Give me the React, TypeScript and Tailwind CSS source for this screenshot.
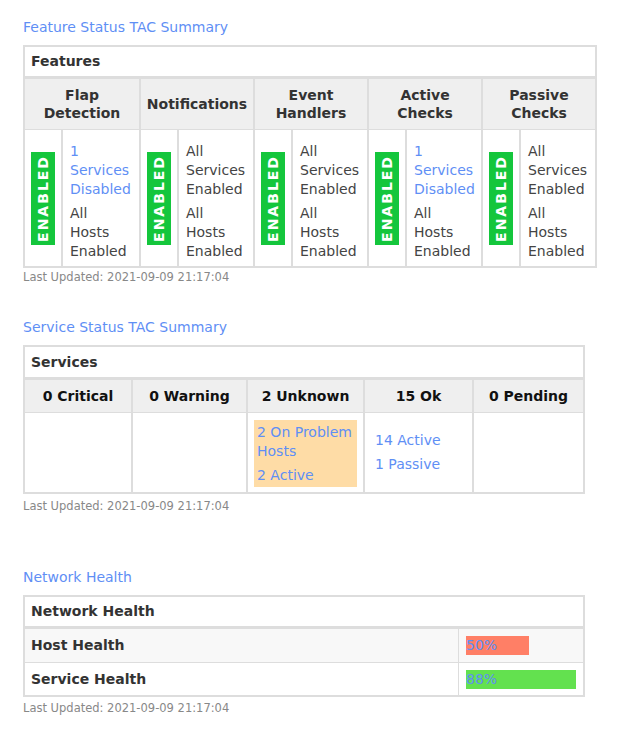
import React from "react";

const font = { fontFamily: '"DejaVu Sans", Verdana, sans-serif' };

type Feature = {
  title: string[];
  services: { text: string; link?: boolean };
  hosts: string;
};

const features: Feature[] = [
  { title: ["Flap", "Detection"], services: { text: "1 Services Disabled", link: true }, hosts: "All Hosts Enabled" },
  { title: ["Notifications"], services: { text: "All Services Enabled" }, hosts: "All Hosts Enabled" },
  { title: ["Event", "Handlers"], services: { text: "All Services Enabled" }, hosts: "All Hosts Enabled" },
  { title: ["Active", "Checks"], services: { text: "1 Services Disabled", link: true }, hosts: "All Hosts Enabled" },
  { title: ["Passive", "Checks"], services: { text: "All Services Enabled" }, hosts: "All Hosts Enabled" },
];

function Words({ text, className }: { text: string; className?: string }) {
  return (
    <div className={className}>
      {text.split(" ").map((w, i) => (
        <div key={i}>{w}</div>
      ))}
    </div>
  );
}

function SectionTitle({ children }: { children: React.ReactNode }) {
  return <h2 className="text-[14px] leading-[18px] text-[#5f8ff5] mb-[9px]">{children}</h2>;
}

function LastUpdated({ className = "mt-[2px]" }: { className?: string }) {
  return <p className={`text-[11.5px] leading-[14px] text-[#888] ${className}`}>Last Updated: 2021-09-09 21:17:04</p>;
}

function FeatureTable() {
  return (
    <div className="w-[574px] border-2 border-[#ddd]">
      <div className="h-[32px] flex items-center px-[6px] font-bold text-[14px] text-[#333] border-b-[3px] border-[#ddd]">
        Features
      </div>
      <div className="grid grid-cols-5">
        {features.map((f, i) => (
          <div key={i} className={`flex flex-col ${i > 0 ? "border-l-2 border-[#ddd]" : ""}`}>
            <div className="h-[51px] bg-[#efefef] flex flex-col items-center justify-center font-bold text-[14px] leading-[18px] text-[#333] border-b border-[#ddd]">
              {f.title.map((t) => (
                <div key={t}>{t}</div>
              ))}
            </div>
            <div className="h-[136px] flex">
              <div className="w-[38px] flex items-center justify-center border-r-2 border-[#ddd]">
                <div className="w-[24px] h-[93px] bg-[#14c63c] flex items-center justify-center">
                  <span className="[writing-mode:vertical-rl] rotate-180 text-white font-bold text-[14px] tracking-[2px] leading-[24px]">
                    ENABLED
                  </span>
                </div>
              </div>
              <div className="flex-1 pl-[7px] pt-[12px] text-[14px] leading-[19px] text-[#444]">
                <Words text={f.services.text} className={f.services.link ? "text-[#5f8ff5]" : ""} />
                <Words text={f.hosts} className="mt-[5px]" />
              </div>
            </div>
          </div>
        ))}
      </div>
    </div>
  );
}

const serviceCols = [
  { label: "0 Critical", w: "w-[106px]" },
  { label: "0 Warning", w: "w-[115px]" },
  { label: "2 Unknown", w: "w-[117px]" },
  { label: "15 Ok", w: "w-[109px]" },
  { label: "0 Pending", w: "flex-1" },
];

function ServiceTable() {
  return (
    <div className="w-[562px] border-2 border-[#ddd]">
      <div className="h-[33px] flex items-center px-[6px] font-bold text-[14px] text-[#333] border-b-[3px] border-[#ddd]">
        Services
      </div>
      <div className="flex">
        {serviceCols.map((c, i) => (
          <div key={i} className={`${c.w} flex flex-col ${i > 0 ? "border-l-2 border-[#ddd]" : ""}`}>
            <div className="h-[33px] bg-[#efefef] flex items-center justify-center font-bold text-[14px] text-[#111] border-b border-[#ddd]">
              {c.label}
            </div>
            <div className="h-[79px] text-[14px] leading-[19px] text-[#5f8ff5]">
              {i === 2 && (
                <div className="mx-[6px] mt-[7px] h-[67px] bg-[#fedca6] px-[3px] pt-[3px]">
                  <div>2 On Problem</div>
                  <div>Hosts</div>
                  <div className="mt-[5px]">2 Active</div>
                </div>
              )}
              {i === 3 && (
                <div className="pl-[10px] pt-[18px]">
                  <div>14 Active</div>
                  <div className="mt-[5px]">1 Passive</div>
                </div>
              )}
            </div>
          </div>
        ))}
      </div>
    </div>
  );
}

const health = [
  { label: "Host Health", pct: 50, color: "bg-[#ff7f66]", row: "bg-[#f8f8f8]" },
  { label: "Service Health", pct: 88, color: "bg-[#63e14f]", row: "bg-white" },
];

function HealthTable() {
  return (
    <div className="w-[562px] border-2 border-[#ddd]">
      <div className="h-[32px] flex items-center px-[6px] font-bold text-[14px] text-[#333] border-b-[3px] border-[#ddd]">
        Network Health
      </div>
      {health.map((h, i) => (
        <div key={h.label} className={`flex h-[33px] ${h.row} ${i > 0 ? "border-t border-[#ddd]" : ""}`}>
          <div className="flex-1 flex items-center px-[6px] font-bold text-[14px] text-[#333]">{h.label}</div>
          <div className="w-[125px] border-l border-[#ddd] flex items-center pl-[7px]">
            <div
              className={`${h.color} h-[19px] text-[14px] leading-[19px] text-[#5f8ff5] whitespace-nowrap`}
              style={{ width: `${Math.round(h.pct * 1.25)}px` }}
            >
              {h.pct}%
            </div>
          </div>
        </div>
      ))}
    </div>
  );
}

export default function App() {
  return (
    <main className="bg-white min-h-[745px] pl-[23px] pt-[18px]" style={font}>
      <SectionTitle>Feature Status TAC Summary</SectionTitle>
      <FeatureTable />
      <LastUpdated />

      <div className="mt-[34px]">
        <SectionTitle>Service Status TAC Summary</SectionTitle>
        <ServiceTable />
        <LastUpdated className="mt-[5px]" />
      </div>

      <div className="mt-[55px]">
        <SectionTitle>Network Health</SectionTitle>
        <HealthTable />
        <LastUpdated className="mt-[4px]" />
      </div>
    </main>
  );
}
